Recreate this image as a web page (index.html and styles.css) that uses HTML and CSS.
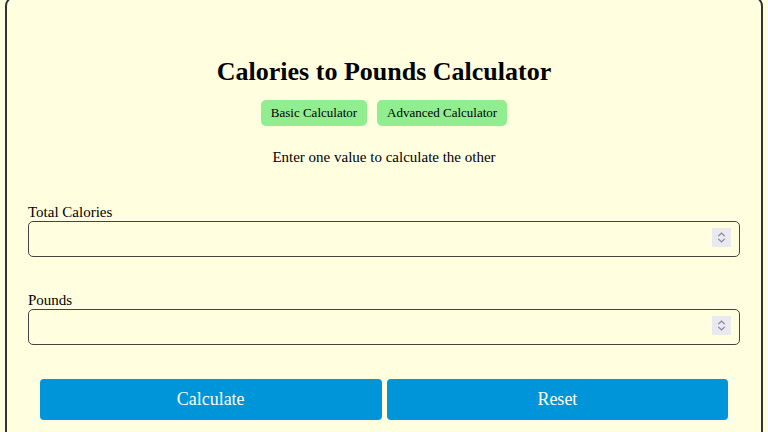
FILE: index.html
```html
<!DOCTYPE html>
<html lang="en">
<head>
<meta charset="utf-8">
<title>Calories to Pounds Calculator</title>
<link rel="stylesheet" href="styles.css">
</head>
<body>
<div class="calc">
  <h1 class="title">Calories to Pounds Calculator</h1>
  <div class="modes">
    <button class="mode">Basic Calculator</button>
    <button class="mode">Advanced Calculator</button>
  </div>
  <p class="hint">Enter one value to calculate the other</p>
  <div class="field">
    <label class="label" for="cal">Total Calories</label>
    <div class="input-wrap">
      <input class="input" id="cal" type="number">
      <span class="spin"><svg width="19" height="19" viewBox="0 0 19 19"><path d="M6.3 8.2 L9.5 5 L12.7 8.2 M6.3 10.8 L9.5 14 L12.7 10.8" fill="none" stroke="#85859a" stroke-width="1.2"/></svg></span>
    </div>
  </div>
  <div class="field">
    <label class="label" for="lb">Pounds</label>
    <div class="input-wrap">
      <input class="input" id="lb" type="number">
      <span class="spin"><svg width="19" height="19" viewBox="0 0 19 19"><path d="M6.3 8.2 L9.5 5 L12.7 8.2 M6.3 10.8 L9.5 14 L12.7 10.8" fill="none" stroke="#85859a" stroke-width="1.2"/></svg></span>
    </div>
  </div>
  <div class="actions">
    <button class="action">Calculate</button>
    <button class="action">Reset</button>
  </div>
</div>
</body>
</html>
```
FILE: styles.css
```css
html, body {
  margin: 0;
  background: #ffffe0;
}
body {
  font-family: "Liberation Serif", "Times New Roman", serif;
  color: #000;
  overflow: hidden;
}
.calc {
  margin: -4px 5px 0;
  border: 2px solid #333;
  border-radius: 10px;
  background: #ffffe0;
  padding: 40px 21px 30px;
}
.title {
  margin: 19px 0 0;
  font-size: 26px;
  font-weight: bold;
  text-align: center;
  line-height: 30px;
}
.modes {
  display: flex;
  justify-content: center;
  gap: 10px;
  margin-top: 13px;
}
.mode {
  font-family: inherit;
  font-size: 13px;
  background: #90ee90;
  border: none;
  border-radius: 5px;
  padding: 0 10px;
  height: 26px;
  color: #000;
}
.hint {
  text-align: center;
  font-size: 15px;
  margin: 22px 0 0;
  line-height: 18px;
}
.field {
  margin-top: 37px;
}
.field + .field {
  margin-top: 34px;
}
.label {
  display: block;
  font-size: 15px;
  line-height: 18px;
}
.input-wrap {
  position: relative;
}
.input {
  display: block;
  box-sizing: border-box;
  width: 100%;
  height: 36px;
  margin: 0;
  border: 1px solid #444;
  border-radius: 5px;
  background: #ffffe0;
  padding: 0 8px;
  font-family: inherit;
  font-size: 15px;
  -moz-appearance: textfield;
}
.input::-webkit-inner-spin-button,
.input::-webkit-outer-spin-button {
  -webkit-appearance: none;
  margin: 0;
}
.spin {
  position: absolute;
  right: 9px;
  top: 7px;
  width: 19px;
  height: 19px;
  background: #e9e9ef;
  display: block;
}
.spin svg {
  display: block;
}
.actions {
  display: flex;
  justify-content: center;
  gap: 5px;
  margin-top: 34px;
}
.action {
  width: 48%;
  height: 41px;
  background: #0094d9;
  color: #fff;
  border: none;
  border-radius: 4px;
  font-family: inherit;
  font-size: 18px;
}
```
